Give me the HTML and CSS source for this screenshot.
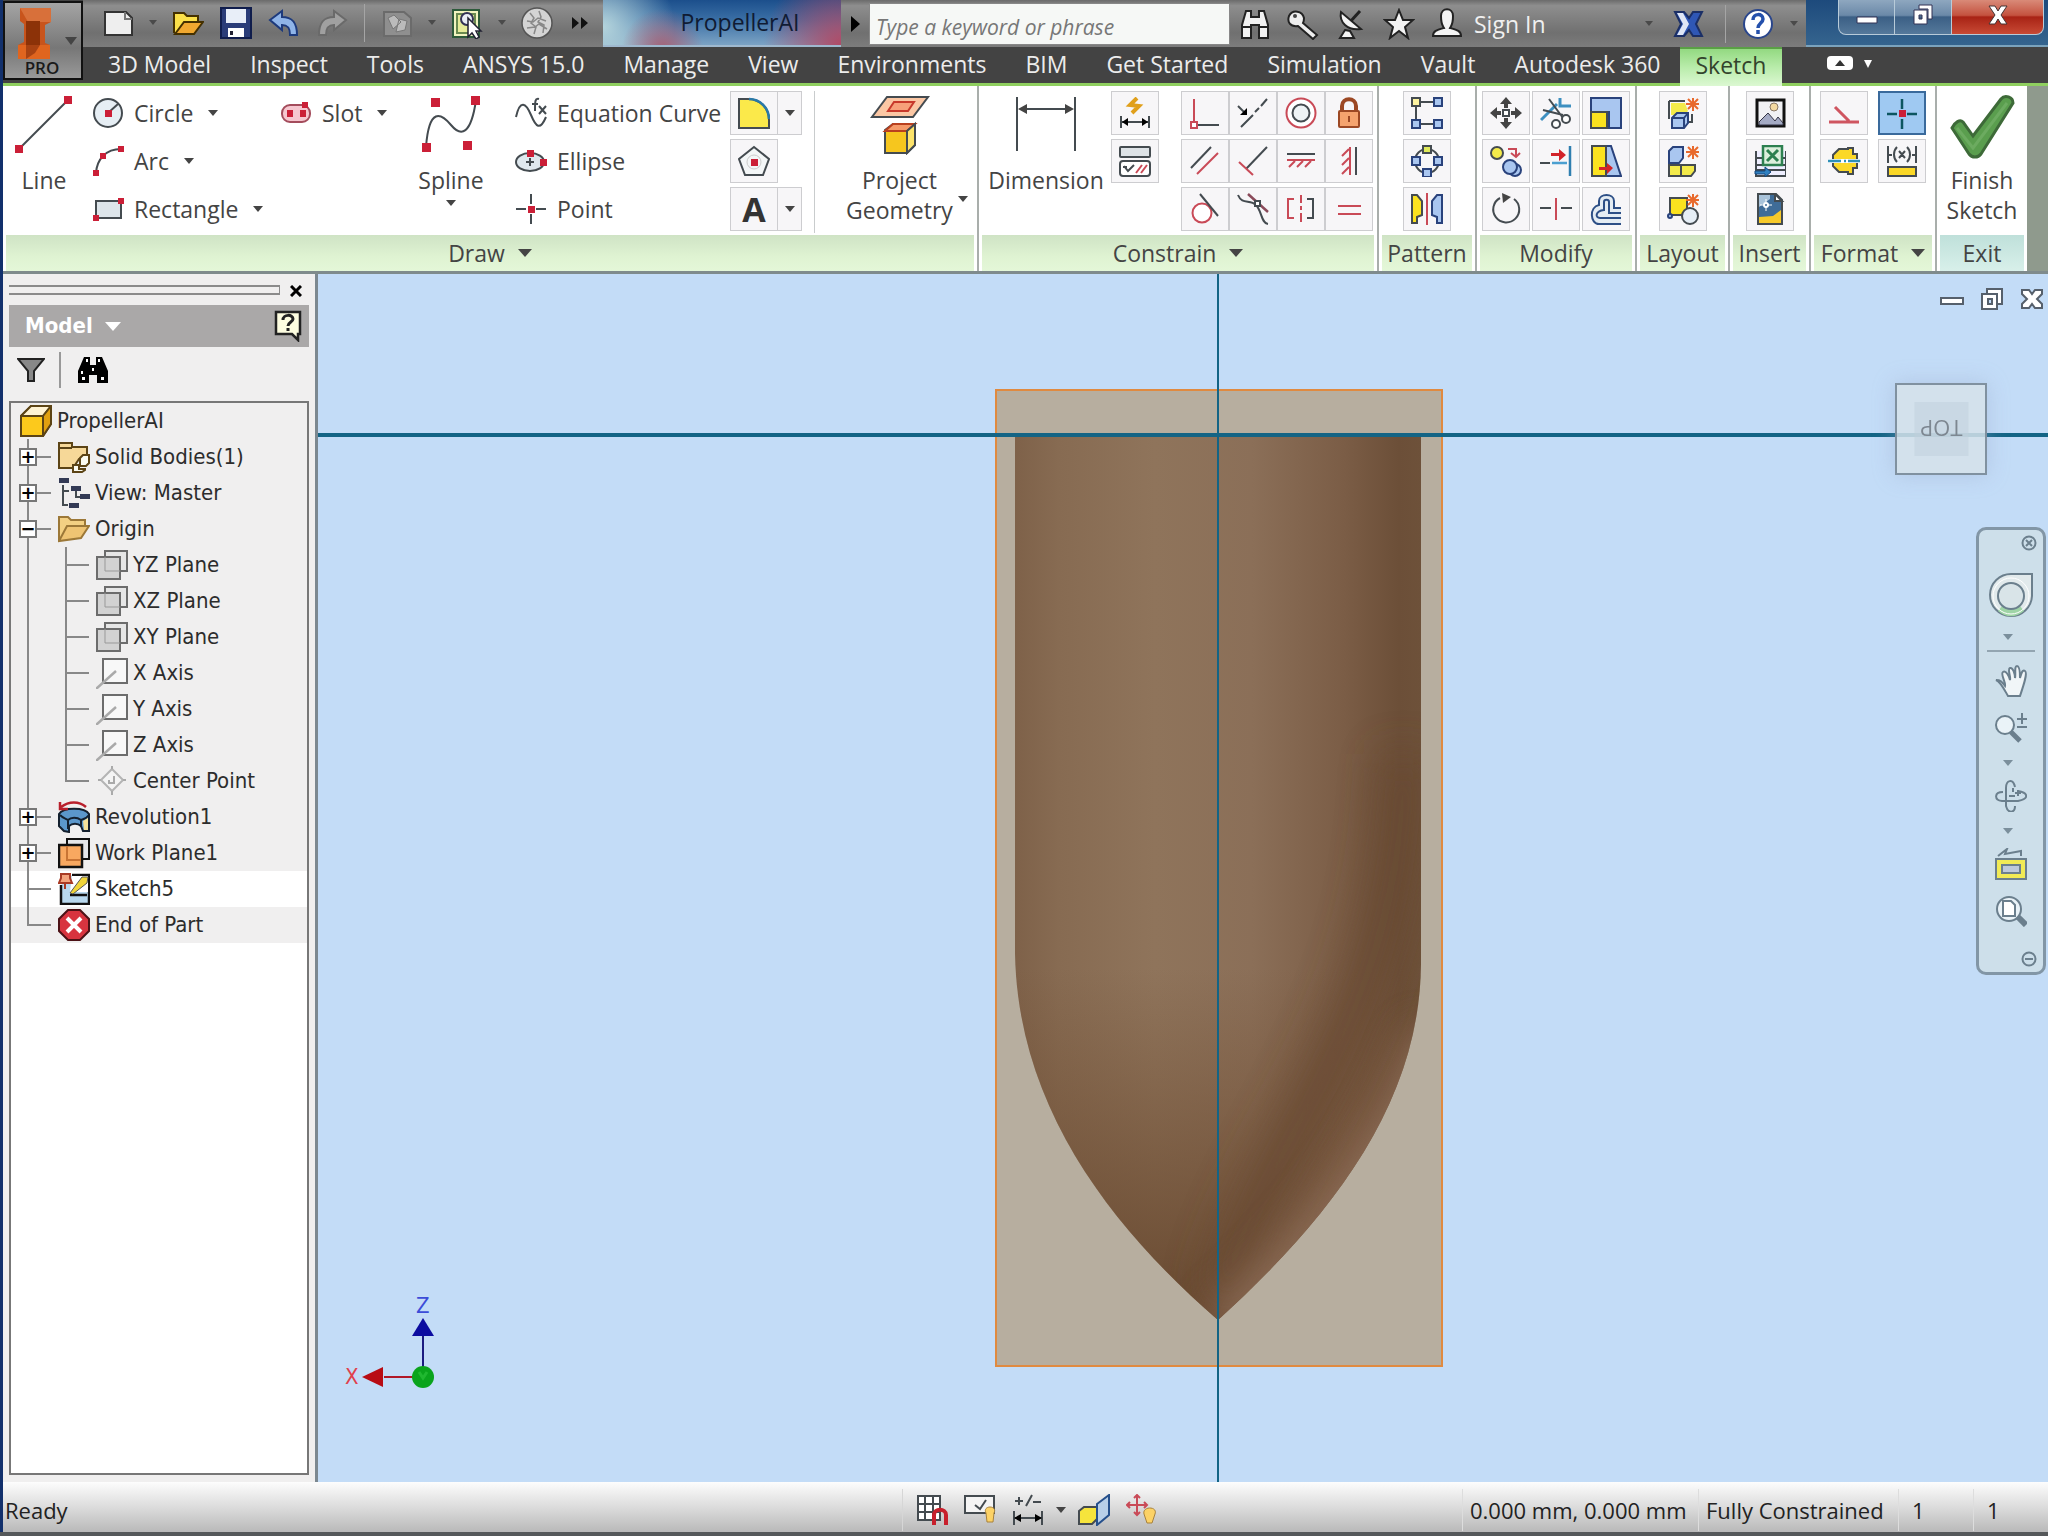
FILE: index.html
```html
<!DOCTYPE html>
<html lang="en">
<head>
<meta charset="utf-8">
<title>PropellerAI</title>
<link rel="stylesheet" href="styles.css">
</head>
<body>
<div class="app">
<header class="head">
  <button class="logo" aria-label="Application menu">
    <svg width="46" height="54" viewBox="0 0 46 54"><path d="M8 1h31v14l-6 3v18l5 2v14H6V38l6-3V17l-4-3z" fill="#c8541c"/><path d="M8 1h31v14H16z" fill="#d8703a"/><path d="M14 14h14v25H14z" fill="#8c3208"/><path d="M6 38h32v14H6z" fill="#e0651f"/><path d="M14 38l14 0-5 8-9 6z" fill="#a84212"/></svg>
    <span>PRO</span>
    <i class="tri"></i>
  </button>
  <div class="titlebar">
    <div class="qat">
      <button aria-label="New"><svg class="ic" viewBox="0 0 32 32"><path d="M3 5h21l6 6v17H3z" fill="#eee" stroke="#333" stroke-width="2"/><path d="M23 5v7h7" fill="none" stroke="#777" stroke-width="2"/></svg></button><i class="tri small"></i>
      <button aria-label="Open"><svg class="ic" viewBox="0 0 32 32"><path d="M2 26V6h10l3 3h11v6" fill="#fbe04a" stroke="#443000" stroke-width="2"/><path d="M3 27l9-12h19l-9 12z" fill="#f0a830" stroke="#443000" stroke-width="2"/></svg></button>
      <button aria-label="Save"><svg class="ic" viewBox="0 0 32 32"><path d="M1 1h30v30H1z" fill="#2a3c78" stroke="#101d4c" stroke-width="2"/><path d="M6 2h20v14H6z" fill="#e8eef8"/><path d="M8 21h16v9H8z" fill="#fff"/><path d="M10 24h3v4h-3z" fill="#223"/></svg></button>
      <button aria-label="Undo"><svg class="ic" viewBox="0 0 32 32"><path d="M2 13L14 4v6c10 0 15 5 15 18h-7c0-7-2-10-8-10v5z" fill="#8fb4e8" stroke="#1d3a7c" stroke-width="2"/></svg></button>
      <button aria-label="Redo"><svg class="ic" viewBox="0 0 32 32"><path d="M30 13L18 4v6C8 10 3 15 3 28h7c0-7 2-10 8-10v5z" fill="#a0a0a0" stroke="#6a6a6a" stroke-width="2"/></svg></button>
      <i class="bar"></i>
      <button aria-label="Update"><svg class="ic" viewBox="0 0 32 32"><path d="M3 5h20l7 6v18H3z" fill="#8f8f8f" stroke="#6b6b6b" stroke-width="2"/><path d="M7 11l6-3 7 7-8 7zM18 12l8 2-2 9-9 2z" fill="#bbb" stroke="#777"/></svg></button><i class="tri small"></i>
      <button aria-label="Select"><svg class="ic" viewBox="0 0 32 32"><path d="M2 3h26v27H2z" fill="#f2f4c0" stroke="#2d5a3a" stroke-width="2"/><path d="M6 7h18v19H6z" fill="#e6ec9a" stroke="#6a8a50" stroke-width="2"/><circle cx="16" cy="12" r="6" fill="#e9eef5" stroke="#335" stroke-width="2"/><path d="M17 11v19l4-4 4 6 3-2-3-6h5z" fill="#fff" stroke="#223" stroke-width="1.5"/></svg></button><i class="tri small"></i>
      <button aria-label="Material"><svg class="ic" viewBox="0 0 32 32"><circle cx="16" cy="16" r="15" fill="#d4d4d4" stroke="#555" stroke-width="1.5"/><path d="M9 6l4 5-3 5 5 4-2 7M18 4l2 6-3 5 6 3-1 8M6 14l6 1 5-4 8 3M6 21l8-1 4-3 8 5" stroke="#888" fill="none" stroke-width="1.5"/></svg></button>
      <button aria-label="More" class="more"><svg width="18" height="14" viewBox="0 0 18 14"><path d="M1 1l7 6-7 6zM10 1l7 6-7 6z" fill="#111"/></svg></button>
    </div>
    <h1 class="doc">PropellerAI</h1>
    <button class="expand" aria-label="Expand search"><svg width="10" height="16" viewBox="0 0 10 16"><path d="M1 0l9 8-9 8z"/></svg></button>
    <input class="search" type="text" placeholder="Type a keyword or phrase" aria-label="Search help">
    <div class="info">
      <button aria-label="Find"><svg class="ic" viewBox="0 0 32 32"><g fill="#f2f2f2" stroke="#222" stroke-width="2"><path d="M7 3h5v6h8V3h5l4 14v13h-9V17h-8v13H3V17z"/><path d="M3 19h9M20 19h9"/></g></svg></button>
      <button aria-label="Tools"><svg class="ic" viewBox="0 0 32 32"><path d="M2 8a8 8 0 0 1 15 2c0 2 0 3-1 5l14 12-4 4-15-13C3 19 0 14 2 8z" fill="#eee" stroke="#222" stroke-width="2"/><circle cx="8" cy="8" r="2" fill="#444"/></svg></button>
      <button aria-label="Communication"><svg class="ic" viewBox="0 0 32 32"><path d="M15 14L25 3" stroke="#222" stroke-width="3"/><path d="M6 4c-2 10 6 19 20 17zM10 22l5 1 4 7H5z" fill="#f4f4f4" stroke="#222" stroke-width="2"/></svg></button>
      <button aria-label="Favorites"><svg class="ic" viewBox="0 0 32 32"><path d="M16 2l4 10h10l-8 7 3 11-9-7-9 7 3-11-8-7h10z" fill="#f4f4f4" stroke="#222" stroke-width="2"/></svg></button>
      <button class="sign"><svg class="ic" viewBox="0 0 32 32"><path d="M10 8c0-9 12-9 12 0s-2 10-3 12c7 2 11 3 11 8H2c0-5 4-6 11-8-1-2-3-3-3-12z" fill="#f4f4f4" stroke="#222" stroke-width="2"/></svg>Sign In</button>
      <i class="tri small push"></i>
      <button class="xchg" aria-label="Exchange"><svg class="ic" viewBox="0 0 32 32"><path d="M2 4h9l5 6 4-6h9l-6 12 6 12h-9l-4-6-5 6H2l6-12z" fill="#2f57b5" stroke="#1b2f66" stroke-width="2"/><path d="M4 5h6l6 11-6 11H4l6-11z" fill="#dfe6f5"/></svg></button>
      <i class="bar"></i>
      <button aria-label="Help"><svg class="ic" viewBox="0 0 32 32"><circle cx="16" cy="16" r="14" fill="#fff" stroke="#2a468c" stroke-width="2"/><path d="M11 12c0-7 10-7 10-1 0 4-5 4-5 9M16 22v4" fill="none" stroke="#2450ac" stroke-width="3.5"/></svg></button>
      <i class="tri small"></i>
    </div>
    <div class="wctl">
      <button aria-label="Minimize"><svg width="24" height="24" viewBox="0 0 24 24"><path d="M2 14h20v6H2z" fill="#fff" stroke="#335" stroke-width="1"/></svg></button>
      <button aria-label="Restore"><svg width="24" height="24" viewBox="0 0 24 24"><path d="M8 2h13v14h-4V6H8zM3 7h13v14H3z M8 12v4h3v-4z" fill="#fff" stroke="#335" fill-rule="evenodd"/></svg></button>
      <button class="close" aria-label="Close"><svg width="24" height="24" viewBox="0 0 24 24"><path d="M3 3h6l3 5 3-5h6l-6 9 6 9h-6l-3-5-3 5H3l6-9z" fill="#fff" stroke="#433"/></svg></button>
    </div>
  </div>
  <nav class="tabs">
    <a href="#">3D Model</a><a href="#">Inspect</a><a href="#">Tools</a><a href="#">ANSYS 15.0</a><a href="#">Manage</a><a href="#">View</a><a href="#">Environments</a><a href="#">BIM</a><a href="#">Get Started</a><a href="#">Simulation</a><a href="#">Vault</a><a href="#">Autodesk 360</a><a href="#" class="on">Sketch</a>
    <button aria-label="Collapse ribbon"><svg width="48" height="16" viewBox="0 0 48 16"><rect x="1" y="1" width="26" height="14" rx="4" fill="#fff"/><path d="M9 11l5-6 5 6z" fill="#333"/><path d="M38 5h8l-4 8z" fill="#fff"/></svg></button>
  </nav>
</header>

<section class="ribbon">
  <div class="panel draw">
    <div class="tools">
      <button class="big line"><svg width="60" height="60" viewBox="0 0 60 60"><path d="M5 54L54 5" class="ink"/><path d="M1 50h8v8H1zM50 1h8v8h-8z" class="pt"/></svg>Line</button>
      <div class="col c1">
        <div class="row"><button class="cmd"><svg class="ic" viewBox="0 0 32 32"><circle cx="16" cy="16" r="14" fill="#e6eef4" class="ink"/><path d="M16 16L26 7" class="ink"/><path d="M13 13h7v7h-7z" class="pt"/></svg>Circle<i class="tri"></i></button></div>
        <div class="row"><button class="cmd"><svg class="ic" viewBox="0 0 32 32"><path d="M4 28C5 14 14 4 29 4" class="ink" fill="none"/><path d="M1 25h6v6H1zM8 8h6v6H8zM26 1h6v6h-6z" class="pt"/></svg>Arc<i class="tri"></i></button></div>
        <div class="row"><button class="cmd"><svg class="ic" viewBox="0 0 32 32"><path d="M4 8h25v17H4z" fill="#dde5ea" class="ink"/><path d="M1 22h6v6H1zM26 5h6v6h-6z" class="pt"/></svg>Rectangle<i class="tri"></i></button></div>
      </div>
      <div class="col c2"><div class="row"><button class="cmd"><svg class="ic" viewBox="0 0 32 32"><rect x="2" y="8" width="28" height="17" rx="8" fill="#f6c6cf" stroke="#a44c5c" stroke-width="2"/><path d="M7 13h6v7H7zM20 13h6v7h-6zM22 5h6v6h-6z" class="pt"/></svg>Slot<i class="tri"></i></button></div></div>
      <button class="big spline"><svg width="60" height="60" viewBox="0 0 60 60"><path d="M5 52C8 12 20 18 30 30S50 40 55 5" class="ink" fill="none" stroke-width="3"/><path d="M1 48h9v9H1zM10 3h9v9h-9zM42 46h9v9h-9zM50 1h9v9h-9z" class="pt"/></svg>Spline<i class="tri"></i></button>
      <div class="col c3">
        <div class="row"><button class="cmd"><svg class="ic" viewBox="0 0 32 32"><path d="M1 20C5 2 11 6 16 18S25 34 31 20" class="ink" fill="none"/><path d="M24 2c-4-1-4 2-4 12M17 7h6M24 9l7 8M31 9l-7 8" class="ink" fill="none"/></svg>Equation Curve</button></div>
        <div class="row"><button class="cmd"><svg class="ic" viewBox="0 0 32 32"><ellipse cx="15" cy="17" rx="14" ry="9" fill="#dfe8ee" class="ink"/><path d="M12 5h7v7h-7zM25 14h7v7h-7z" class="pt"/><path d="M11 17h8M15 13v8" class="ink"/></svg>Ellipse</button></div>
        <div class="row"><button class="cmd"><svg class="ic" viewBox="0 0 32 32"><path d="M1 16h10M21 16h10M16 1v10M16 21v10" class="ink"/><path d="M13 13h7v7h-7z" class="pt"/></svg>Point</button></div>
      </div>
      <div class="col c4">
        <div class="row"><button class="sq" aria-label="Fillet"><svg class="ic" viewBox="0 0 32 32"><path d="M1 2h9c12 0 21 9 21 21v8H1z" fill="#fbe94a" class="ink"/><path d="M11 2c11 0 20 9 20 20" fill="none" stroke="#2979a8" stroke-width="2.500"/></svg></button><button class="sq thin" aria-label="Fillet options"><i class="tri"></i></button></div>
        <div class="row"><button class="sq" aria-label="Polygon"><svg class="ic" viewBox="0 0 32 32"><path d="M16 2l15 12-6 16H7L1 14z" fill="#f3f6f7" class="ink"/><circle cx="16" cy="17" r="7" fill="none" stroke="#ccc"/><path d="M13 14h7v7h-7z" class="pt"/></svg></button></div>
        <div class="row"><button class="sq text">A</button><button class="sq thin" aria-label="Text options"><i class="tri"></i></button></div>
      </div>
      <button class="big proj"><svg width="60" height="60" viewBox="0 0 60 60"><path d="M17 2h41L43 22H2z" fill="#fbc7a4" class="ink"/><path d="M24 7h20l-6 9H18z" fill="#f7a07a" stroke="#c8392b" stroke-width="2"/><path d="M15 35l8-6h22v21l-8 8H15z" fill="#f6c61e" class="ink"/><path d="M15 36h22l8-7H23z" fill="#f59a6a" stroke="#b9401f" stroke-width="2"/><path d="M37 36v22l8-8V29z" fill="#fce36a" class="ink"/></svg><span>Project<br>Geometry</span><i class="tri"></i></button>
    </div>
    <h2>Draw<i class="tri"></i></h2>
  </div>

  <div class="panel constrain">
    <div class="tools">
      <button class="big dimension"><svg width="60" height="60" viewBox="0 0 60 60"><path d="M1 2v54M59 2v54M4 14h52" class="ink"/><path d="M2 14l9-5v10zM58 14l-9-5v10z" fill="#444"/></svg>Dimension</button>
      <div class="col"><div class="row"><button class="sq" aria-label="Automatic dimensions"><svg class="ic" viewBox="0 0 32 32"><path d="M2 19v12M30 19v12M3 25h26" class="ink" stroke-width="3"/><path d="M3 25l6-4v8zM29 25l-6-4v8z"/><path d="M18 1l-7 7 9 1-7 7" fill="none" stroke="#e0a01c" stroke-width="4"/></svg></button></div>
      <div class="row"><button class="sq" aria-label="Show constraints"><svg class="ic" viewBox="0 0 32 32"><rect x="1" y="2" width="30" height="10" rx="1" fill="#dde2e6" class="ink"/><rect x="1" y="16" width="30" height="15" rx="3" fill="#fff" class="ink"/><path d="M5 21l4 5 6-6M8 22l-4 0" class="ink" fill="none"/><path d="M17 28l6-8M22 28l6-8" class="red"/></svg></button></div></div>
      <div class="grid g4">
        <button class="sq" aria-label="Coincident"><svg class="ic" viewBox="0 0 32 32"><path d="M5 2v23" class="red"/><path d="M2 25h6v6H2z" fill="#fff" class="red"/><path d="M9 28h21" class="ink"/></svg></button>
        <button class="sq" aria-label="Collinear"><svg class="ic" viewBox="0 0 32 32"><path d="M4 30l12-12M18 15l4-4M24 9l6-7" class="ink"/><path d="M1 9l8 8" class="ink"/><path d="M10 18V11l-7 7z"/></svg></button>
        <button class="sq" aria-label="Concentric"><svg class="ic" viewBox="0 0 32 32"><circle cx="16" cy="16" r="14.500" fill="#fff" class="red"/><circle cx="16" cy="16" r="8.500" fill="#eef3f5" class="ink"/></svg></button>
        <button class="sq" aria-label="Fix"><svg class="ic" viewBox="0 0 32 32"><path d="M9 14V9c0-9 14-9 14 0v5" fill="none" stroke="#9c4824" stroke-width="4"/><rect x="6" y="14" width="20" height="16" rx="1" fill="#f5a36e" stroke="#9c4824" stroke-width="2"/><path d="M16 19v6" stroke="#9c4824" stroke-width="2"/></svg></button>
        <button class="sq" aria-label="Parallel"><svg class="ic" viewBox="0 0 32 32"><path d="M2 23L22 2" class="ink"/><path d="M8 29L29 8" class="red"/></svg></button>
        <button class="sq" aria-label="Perpendicular"><svg class="ic" viewBox="0 0 32 32"><path d="M9 24L30 2" class="ink"/><path d="M2 17l14 13" class="red"/></svg></button>
        <button class="sq" aria-label="Horizontal"><svg class="ic" viewBox="0 0 32 32"><path d="M2 9h28" class="ink"/><path d="M2 15h28M4 22l6-6M12 22l6-6M20 22l6-6" class="red"/></svg></button>
        <button class="sq" aria-label="Vertical"><svg class="ic" viewBox="0 0 32 32"><path d="M23 2v28" class="ink"/><path d="M17 2v28M16 4l-7 7M16 13l-7 7M16 22l-7 7" class="red"/></svg></button>
        <button class="sq" aria-label="Tangent"><svg class="ic" viewBox="0 0 32 32"><circle cx="13" cy="20" r="9.500" fill="#fff" class="red"/><path d="M11 1l18 22" class="ink"/></svg></button>
        <button class="sq" aria-label="Smooth"><svg class="ic" viewBox="0 0 32 32"><path d="M1 2c4 10 12 4 18 10s5 18 12 19" class="ink" fill="none"/><path d="M11 1l20 18" stroke="#8a4a5a" stroke-width="2.500"/><path d="M18 8h5v5h-5z" fill="#fff" class="ink"/></svg></button>
        <button class="sq" aria-label="Symmetric"><svg class="ic" viewBox="0 0 32 32"><path d="M9 6H3v19h6M16 2v8M16 13v4M16 20v9" class="red" fill="none"/><path d="M22 6h6v19h-6" class="ink" fill="none"/></svg></button>
        <button class="sq" aria-label="Equal"><svg class="ic" viewBox="0 0 32 32"><path d="M5 13h23M5 21h23" class="red"/></svg></button>
      </div>
    </div>
    <h2>Constrain<i class="tri"></i></h2>
  </div>

  <div class="panel pattern">
    <div class="tools"><div class="grid">
      <button class="sq" aria-label="Rectangular pattern"><svg class="ic" viewBox="0 0 32 32"><path d="M5 5v22M9 5h18M9 27h18" class="ink"/><path d="M1 1h8v8H1z" fill="#fdf3a0" class="ink"/><path d="M23 1h8v8h-8zM1 23h8v8H1zM23 23h8v8h-8z" class="bl"/></svg></button>
      <button class="sq" aria-label="Circular pattern"><svg class="ic" viewBox="0 0 32 32"><circle cx="16" cy="16" r="12" fill="none" class="ink"/><path d="M12 1h8v7h-8z" fill="#e0ea5a" class="ink"/><path d="M1 12h8v8H1zM23 12h8v8h-8zM12 24h8v8h-8z" class="bl"/></svg></button>
      <button class="sq" aria-label="Mirror"><svg class="ic" viewBox="0 0 32 32"><path d="M1 2h5l5 6v14l-5 2v6H1z" fill="#fbe21f" class="ink"/><path d="M31 2h-5l-5 6v14l5 2v6h5z" class="bl"/><path d="M16 0v32" class="red"/></svg></button>
    </div></div>
    <h2>Pattern</h2>
  </div>

  <div class="panel modify">
    <div class="tools"><div class="grid g3">
      <button class="sq" aria-label="Move"><svg class="ic" viewBox="0 0 32 32"><path d="M16 0l6 7h-4v4h-4V7h-4zM16 32l6-7h-4v-4h-4v4h-4zM0 16l7-6v4h4v4H7v4zM32 16l-7-6v4h-4v4h4v4z" fill="#444"/><path d="M13 13h6v6h-6z" fill="#fff" class="ink"/></svg></button>
      <button class="sq" aria-label="Trim"><svg class="ic" viewBox="0 0 32 32"><path d="M1 23L17 7M20 1v8h11" stroke="#3d8fc0" stroke-width="3" fill="none"/><path d="M9 2l14 19M3 13l20 5" class="ink"/><circle cx="26" cy="22" r="4" fill="#fff" class="ink"/><circle cx="16" cy="27" r="4" fill="#fff" class="ink"/></svg></button>
      <button class="sq" aria-label="Scale"><svg class="ic" viewBox="0 0 32 32"><path d="M1 1h30v30H19V15H1z" class="bl"/><path d="M1 15h16v16H1z" fill="#fbe21f" class="ink"/></svg></button>
      <button class="sq" aria-label="Copy"><svg class="ic" viewBox="0 0 32 32"><circle cx="7" cy="8" r="6" fill="#f3ea4a" class="ink"/><circle cx="25" cy="25" r="6" class="bl"/><circle cx="20" cy="22" r="7" class="bl"/><path d="M18 4h8v7M21 8l5 4 4-4" class="red" fill="none"/></svg></button>
      <button class="sq" aria-label="Extend"><svg class="ic" viewBox="0 0 32 32"><path d="M30 1v30" stroke="#2f7fb0" stroke-width="2.500"/><path d="M0 18h10" class="ink"/><path d="M12 18h15" stroke="#4b9fd0" stroke-width="2.500"/><path d="M11 8h8V4l7 6-7 6v-5h-8z" fill="#d2232a"/></svg></button>
      <button class="sq" aria-label="Stretch"><svg class="ic" viewBox="0 0 32 32"><path d="M16 1h5l10 30H16z" class="bl"/><path d="M2 1h14v30H2z" fill="#fbe21f" class="ink"/><path d="M9 22h8v-4l6 5-6 6v-4H9z" fill="#d2232a"/></svg></button>
      <button class="sq" aria-label="Rotate"><svg class="ic" viewBox="0 0 32 32"><path d="M10 5a13 13 0 1 0 14 1" fill="none" class="ink" stroke-width="3"/><path d="M12 0l9 4-8 6z" fill="#444"/></svg></button>
      <button class="sq" aria-label="Split"><svg class="ic" viewBox="0 0 32 32"><path d="M0 15h11M21 15h11" class="ink"/><path d="M16 5v22" class="red"/></svg></button>
      <button class="sq" aria-label="Offset"><svg class="ic" viewBox="0 0 32 32"><path d="M31 15h-7V8c0-8-15-8-15 0v4C-1 14 0 31 9 31h22M31 20H19V9c0-3-5-3-5 0v8c-9 1-9 8-4 8h21" fill="#e4ecf3" stroke="#2d4f86" stroke-width="2"/></svg></button>
    </div></div>
    <h2>Modify</h2>
  </div>

  <div class="panel layout">
    <div class="tools"><div class="grid">
      <button class="sq" aria-label="Make part"><svg class="ic" viewBox="0 0 32 32"><path d="M2 4h16M2 4v18M25 17v8h-3" class="ink" fill="none"/><path d="M4 6h14l3 8-4 4H4z" fill="#f3ea4a"/><path d="M5 21l5-5h11v10l-4 5H5z" class="bl"/><path d="M5 21h12v10M17 21l4-5" fill="none" stroke="#29427c" stroke-width="2"/><path d="M26 1v13M19 7h14M21 2l10 10M31 2L21 12" class="sun"/></svg></button>
      <button class="sq" aria-label="Make components"><svg class="ic" viewBox="0 0 32 32"><path d="M2 20h12v11H2zM14 20h14v6l-4 5H14z" fill="#f3ea4a" class="ink"/><path d="M2 6l4-4h10v11l-4 5H2z" class="bl"/><path d="M26 1v13M19 7h14M21 2l10 10M31 2L21 12" class="sun"/></svg></button>
      <button class="sq" aria-label="Create block"><svg class="ic" viewBox="0 0 32 32"><path d="M3 5h17v17H3z" fill="#fbe21f" class="ink"/><circle cx="3" cy="23" r="2" class="bl"/><circle cx="23" cy="23" r="8" fill="#e6eef6" class="ink"/><path d="M26 1v13M19 7h14M21 2l10 10M31 2L21 12" class="sun"/></svg></button>
    </div></div>
    <h2>Layout</h2>
  </div>

  <div class="panel insert">
    <div class="tools"><div class="grid">
      <button class="sq" aria-label="Insert image"><svg class="ic" viewBox="0 0 32 32"><path d="M3 3h27v26H3z" fill="#f1f1f4" stroke="#111" stroke-width="3"/><circle cx="20" cy="10" r="4" fill="#f3d9a2" stroke="#876"/><path d="M5 25l9-9 7 8 3-4 5 6v2H5z" fill="#a4aac4" stroke="#334"/></svg></button>
      <button class="sq" aria-label="Import points"><svg class="ic" viewBox="0 0 32 32"><path d="M2 6v25h30V6M2 13h30M2 20h30M2 25h30" class="ink" fill="#eef"/><path d="M9 1h19v19H9z" fill="#dcefdc" stroke="#2d8050" stroke-width="2.500"/><path d="M13 5l11 11M24 5L13 16" stroke="#2d8050" stroke-width="3"/><path d="M1 26h10v-4l6 5-6 5v-3H1z" fill="#2f80c0" stroke="#15477c"/></svg></button>
      <button class="sq" aria-label="Insert drawing"><svg class="ic" viewBox="0 0 32 32"><path d="M4 1h18l6 6v24H4z" fill="#f6c92a" class="ink"/><path d="M5 2h17l5 6v9l-8 6-14 1z" fill="#3f6c98"/><path d="M5 2h11v4L5 14z" fill="#a9c3da"/><path d="M21 1v7h7z" fill="#fff" class="ink"/><circle cx="12" cy="12" r="2" fill="none" stroke="#fff" stroke-width="2"/><path d="M12 6v4M12 14v4M6 12h4M14 12h4" stroke="#fff" stroke-width="1"/></svg></button>
    </div></div>
    <h2>Insert</h2>
  </div>

  <div class="panel format">
    <div class="tools"><div class="grid g2">
      <button class="sq" aria-label="Construction"><svg class="ic" viewBox="0 0 32 32"><path d="M1 25h30M7 10l14 14" stroke="#cf5560" stroke-width="3"/></svg></button>
      <button class="sq on" aria-label="Center point"><svg class="ic" viewBox="0 0 32 32"><path d="M1 17h10M21 17h10M16 2v10M16 22v10" stroke="#0c5560" stroke-width="2.500"/><path d="M13 13h7v7h-7z" class="pt"/></svg></button>
      <button class="sq" aria-label="Centerline"><svg class="ic" viewBox="0 0 32 32"><path d="M11 4h9v-1h5v6h4v14h-4v6h-5v-2h-9l-6-6v-11z" fill="#fbd827" class="ink"/><path d="M0 16h32" stroke="#fff" stroke-width="4"/><path d="M0 16h13M16 16h2M20 16h12" stroke="#2f90b8" stroke-width="2.500"/></svg></button>
      <button class="sq" aria-label="Driven dimension"><svg class="ic" viewBox="0 0 32 32"><path d="M2 1v17M2 10h4M30 1v17M26 10h4M11 2c-4 4-4 11 0 15M21 2c4 4 4 11 0 15M13 6l6 7M19 6l-6 7" class="ink" fill="none"/><path d="M2 22h28v9H2z" fill="#fbd827" class="ink"/></svg></button>
    </div></div>
    <h2>Format<i class="tri"></i></h2>
  </div>

  <div class="panel exit">
    <div class="tools"><button class="big"><svg width="66" height="66" viewBox="0 0 66 66"><path d="M3 34c3-6 8-9 11-6l10 14L52 5c4-5 12-2 12 4L32 60c-3 4-9 4-12 0z" fill="#5a9e4e" stroke="#3d6a38" stroke-width="3"/><path d="M8 34l16 20L58 9" fill="none" stroke="#6cab60" stroke-width="3"/></svg><span>Finish<br>Sketch</span></button></div>
    <h2>Exit</h2>
  </div>
</section>

<main class="work">
  <aside class="side">
    <div class="grip"><i></i><button aria-label="Close panel"><svg width="12" height="12" viewBox="0 0 12 12"><path d="M1 1l10 10M11 1L1 11" stroke="#000" stroke-width="3"/></svg></button></div>
    <div class="model"><button>Model<i class="tri"></i></button><button aria-label="Panel help"><svg width="28" height="32" viewBox="0 0 28 32"><path d="M2 2h24v22h-2v6l-6-6H2z" fill="#fdfde0" stroke="#222" stroke-width="2.500"/><path d="M9 10c0-6 10-6 10-1 0 3-5 3-5 7M14 18v3" fill="none" stroke="#222" stroke-width="3"/></svg></button></div>
    <div class="filter">
      <button aria-label="Filter"><svg width="28" height="26" viewBox="0 0 28 26"><path d="M1 2h26L17 14v10h-6V14z" fill="#888" stroke="#222" stroke-width="2"/></svg></button><i></i>
      <button aria-label="Find"><svg width="32" height="28" viewBox="0 0 32 28"><path d="M7 1h6v8h6V1h6l6 14v12H20v-8h-8v8H1V15z"/><path d="M9 3h2v3H9zM21 3h2v3h-2zM4 15h2v3H4zM5 21h3v3H5zM24 21h3v3h-3zM15 12h2v3h-2z" fill="#fff"/></svg></button>
    </div>
    <div class="tree">
      <div class="node root"><svg class="ic" viewBox="0 0 32 32"><path d="M1 11L11 1h20v18L23 31H1z" fill="#fcc91c" class="brown"/><path d="M1 11h22l8-10H11z" fill="#fff3d2" class="brown"/><path d="M23 11v20l8-12V1z" fill="#e0a010" class="brown"/></svg>PropellerAI</div>
      <ul>
        <li><div class="node"><button class="tg" aria-label="Expand">+</button><svg class="ic" viewBox="0 0 32 32"><path d="M1 27V2h13v4h15v12h-8l-6 9z" fill="#f6d898" class="brown"/><path d="M1 7h13" class="brown"/><path d="M22 17l3-3h6v8l-3 3h-6zM15 24h6v4h6v1l-3 2h-9z" fill="#fbfbf0" class="brown"/></svg>Solid Bodies(1)</div></li>
        <li><div class="node"><button class="tg" aria-label="Expand">+</button><svg class="ic" viewBox="0 0 32 32"><path d="M1 1h10v5H1zM13 9h10v5H13zM22 17h10v5H22zM11 26h10v5H11z" fill="#333a55"/><path d="M5 8v20h5M5 14h6M18 14v6h4" class="ink" fill="none"/></svg>View: Master</div></li>
        <li><div class="node"><button class="tg" aria-label="Collapse">−</button><svg class="ic" viewBox="0 0 32 32"><path d="M1 28V4h9l3 3h14v5" fill="#f3d083" stroke="#9c7838" stroke-width="2"/><path d="M1 28l8-15h22l-8 12z" fill="#efc473" stroke="#9c7838" stroke-width="2"/></svg>Origin</div>
          <ul>
            <li><div class="node"><svg class="ic" viewBox="0 0 32 32"><path d="M9 2h22v20H9z" fill="#e6e6e6" class="gy"/><path d="M1 8h23v22H1z" fill="#d2d2d2" class="gy"/><path d="M9 8v14h15" fill="none" stroke="#999"/></svg>YZ Plane</div></li>
            <li><div class="node"><svg class="ic" viewBox="0 0 32 32"><path d="M9 2h22v20H9z" fill="#e6e6e6" class="gy"/><path d="M1 8h23v22H1z" fill="#d2d2d2" class="gy"/><path d="M9 8v14h15" fill="none" stroke="#999"/></svg>XZ Plane</div></li>
            <li><div class="node"><svg class="ic" viewBox="0 0 32 32"><path d="M9 2h22v20H9z" fill="#e6e6e6" class="gy"/><path d="M1 8h23v22H1z" fill="#d2d2d2" class="gy"/><path d="M9 8v14h15" fill="none" stroke="#999"/></svg>XY Plane</div></li>
            <li><div class="node"><svg class="ic" viewBox="0 0 32 32"><path d="M7 2h24v24H7z" fill="#f8f8f8" class="gy"/><path d="M0 32l20-18" stroke="#aaa" stroke-width="2.500"/></svg>X Axis</div></li>
            <li><div class="node"><svg class="ic" viewBox="0 0 32 32"><path d="M7 2h24v24H7z" fill="#f8f8f8" class="gy"/><path d="M0 32l20-18" stroke="#aaa" stroke-width="2.500"/></svg>Y Axis</div></li>
            <li><div class="node"><svg class="ic" viewBox="0 0 32 32"><path d="M7 2h24v24H7z" fill="#f8f8f8" class="gy"/><path d="M0 32l20-18" stroke="#aaa" stroke-width="2.500"/></svg>Z Axis</div></li>
            <li><div class="node"><svg class="ic" viewBox="0 0 32 32"><path d="M16 4l11 11-11 11L5 15z" fill="#f4f4f4" stroke="#b4b4b4" stroke-width="2"/><path d="M18 11v7h-5v-3M16 1v3M16 26v4M2 15h3M27 15h3" fill="none" stroke="#aaa" stroke-width="2"/></svg>Center Point</div></li>
          </ul>
        </li>
        <li><div class="node"><button class="tg" aria-label="Expand">+</button><svg class="ic" viewBox="0 0 32 32"><path d="M1 13c4-7 26-7 30 0v17h-6l-2-5c-3-3-9-3-12 0v6l-5-1-5-5z" fill="#5b97cb" stroke="#14202e" stroke-width="2"/><path d="M2 14c4 4 5 3 8 5v9M10 19c3-3 9-3 13 0v7M31 14c-3 4-5 4-8 5" fill="none" stroke="#14202e" stroke-width="2"/><path d="M25 20l5-3v12h-4z" fill="#f6e29a"/><path d="M3 6c8-6 18-6 25 0M2 1v7h8" fill="none" stroke="#b8202c" stroke-width="2.500"/></svg>Revolution1</div></li>
        <li><div class="node"><button class="tg" aria-label="Expand">+</button><svg class="ic" viewBox="0 0 32 32"><path d="M9 2h22v20H9z" fill="#e4e6ea" stroke="#111" stroke-width="2"/><path d="M1 8h23v22H1z" fill="#f8a860" stroke="#111" stroke-width="2.500"/><path d="M9 9v14h14" fill="none" stroke="#c87434" stroke-width="2"/></svg>Work Plane1</div></li>
        <li class="active"><div class="node"><svg class="ic" viewBox="0 0 32 32"><path d="M3 12v19h28V2H14" fill="#b8d8ee" stroke="#111" stroke-width="2.500"/><path d="M14 3h16v16H12z" fill="#fff"/><path d="M12 22h17" stroke="#111" stroke-width="2.500"/><path d="M12 20l12-16 6 0-1 6-14 11z" fill="#f1d63a" stroke="#555"/><path d="M3 1h9v4l2 5H1l2-5zM7 10v6" fill="#f3a37c" stroke="#a83a24" stroke-width="2"/></svg>Sketch5</div></li>
        <li><div class="node"><svg class="ic" viewBox="0 0 32 32"><path d="M10 1h12l9 9v12l-9 9H10l-9-9V10z" fill="#d8343f" stroke="#4c1216" stroke-width="2"/><path d="M9 9l14 14M23 9L9 23" stroke="#fff" stroke-width="4"/></svg>End of Part</div></li>
      </ul>
    </div>
  </aside>

  <section class="canvas">
    <svg class="scene" viewBox="0 0 1730 1208" preserveAspectRatio="xMidYMid slice">
      <defs>
        <linearGradient id="body"><stop offset="0" stop-color="#7d6048"/><stop offset=".12" stop-color="#876b52"/><stop offset=".35" stop-color="#8f745b"/><stop offset=".58" stop-color="#8b6f58"/><stop offset=".8" stop-color="#7b5d46"/><stop offset=".93" stop-color="#6c4f38"/><stop offset="1" stop-color="#6e523a"/></linearGradient>
        <linearGradient id="nose" x1="0" y1="0" x2="0" y2="1"><stop offset=".6" stop-color="#6e4b30" stop-opacity="0"/><stop offset="1" stop-color="#65462d" stop-opacity=".95"/></linearGradient>
        <clipPath id="hull"><path d="M697 161V680C700 835 795 955 900 1046C1005 950 1102 835 1103 690V161z"/></clipPath>
        <filter id="soft" x="-50%" y="-50%" width="200%" height="200%"><feGaussianBlur stdDeviation="20"/></filter>
      </defs>
      <path d="M678 116h446v976H678z" fill="#b7ae9f" stroke="#e08a40" stroke-width="2"/>
      <g clip-path="url(#hull)">
        <path d="M690 160h420v890H690z" fill="url(#body)"/>
        <path d="M690 160h420v890H690z" fill="url(#nose)"/>
        <path d="M1086 480C1086 760 930 880 904 1030" fill="none" stroke="#684a33" stroke-width="44" opacity=".8" filter="url(#soft)"/>
        <path d="M1120 760C1094 860 1004 970 906 1060" fill="none" stroke="#957560" stroke-width="50" opacity=".8" filter="url(#soft)"/>
      </g>
      <path d="M0 161h1730" stroke="#136485" stroke-width="4"/>
      <path d="M900 0v1209" stroke="#136485" stroke-width="2"/>
    </svg>
    <div class="docctl">
      <button aria-label="Minimize document"><svg width="24" height="24" viewBox="0 0 24 24"><path d="M1 11h22v6H1z" fill="#fff" stroke="#56606c" stroke-width="2"/></svg></button>
      <button aria-label="Restore document"><svg width="24" height="24" viewBox="0 0 24 24"><path d="M7 2h15v15h-5V7H7zM2 7h15v15H2zM8 12v5h4v-5z" fill="#fff" stroke="#56606c" stroke-width="2" fill-rule="evenodd"/></svg></button>
      <button aria-label="Close document"><svg width="24" height="24" viewBox="0 0 24 24"><path d="M2 3h7l3 4 3-4h7v4l-5 5 5 5v4h-7l-3-4-3 4H2v-4l5-5-5-5z" fill="#fff" stroke="#56606c" stroke-width="2"/></svg></button>
    </div>
    <button class="cube"><span>TOP</span></button>
    <div class="nav">
      <button class="end" aria-label="Close navigation bar"><svg width="16" height="16" viewBox="0 0 16 16"><circle cx="8" cy="8" r="6.500" fill="none" class="sl"/><path d="M5 5l6 6M11 5l-6 6" class="sl"/></svg></button>
      <button class="wheel" aria-label="Steering wheel"><svg width="48" height="48" viewBox="0 0 48 48"><path d="M24 2h21v22A21 21 0 1 1 24 2z" fill="#e2eaec" class="sl"/><path d="M11 39c8 7 18 7 26 0l-4-5c-6 4-12 4-18 0z" fill="#9fd4a6"/><circle cx="24" cy="24" r="13" fill="#d9e4e8" class="sl"/><circle cx="24" cy="24" r="18" fill="none" stroke="#fff"/></svg></button>
      <i class="tri"></i><hr>
      <button aria-label="Pan"><svg class="ic" viewBox="0 0 32 32"><path d="M1 15c5 0 6 2 9 6 1-4-5-12-2-14s6 4 7 8c1-4-3-11 0-12s5 6 5 10c1-4-1-12 2-12s3 8 3 12c1-3 2-9 5-7s-2 16-5 25H13C10 26 6 17 1 15z" fill="#f1f6f8" class="sl"/></svg></button>
      <button aria-label="Zoom"><svg class="ic" viewBox="0 0 32 32"><circle cx="10" cy="13" r="9" fill="#eaf3f8" class="sl"/><path d="M16 20l9 9" stroke="#6b7f8d" stroke-width="5"/><path d="M22 7h10M27 1v11M22 15h10" class="sl"/></svg></button>
      <i class="tri"></i>
      <button aria-label="Orbit"><svg class="ic" viewBox="0 0 32 32"><path d="M20 7C18-2 11 0 11 8v18c2 8 9 7 9 0M8 12c-9 0-9 8-1 9h16c11-2 11-8 0-10M18 8v4M14 16h6M23 10v6M20 13h6" fill="none" class="sl"/></svg></button>
      <i class="tri"></i>
      <button aria-label="Look at"><svg class="ic" viewBox="0 0 32 32"><path d="M1 11h30v20H1z" fill="#f1ea55" class="sl"/><path d="M7 17h18v8H7z" fill="#bdc9dc" class="sl"/><path d="M3 8l9-7-2 5 16-3v5" fill="none" class="sl"/></svg></button>
      <button aria-label="Zoom all"><svg class="ic" viewBox="0 0 32 32"><circle cx="14" cy="14" r="12" fill="#eaf3f8" class="sl"/><path d="M23 22l8 8" stroke="#6b7f8d" stroke-width="6"/><path d="M8 6h8l4 4v11H8z" fill="#fff" class="sl"/></svg></button>
      <button class="end last" aria-label="Customize navigation bar"><svg width="16" height="16" viewBox="0 0 16 16"><circle cx="8" cy="8" r="6.500" fill="none" class="sl"/><path d="M4 8h8" class="sl"/></svg></button>
    </div>
    <svg class="axes" width="100" height="100" viewBox="0 0 100 100"><text x="74" y="19" fill="#3c4cd8">Z</text><text x="3" y="90" fill="#e0404c">X</text><path d="M81 40v36" stroke="#1b1b80" stroke-width="2"/><path d="M81 24l11 18H70z" fill="#0c0ca0"/><path d="M42 83h30" stroke="#b01828" stroke-width="2"/><path d="M20 83l21-10v20z" fill="#b80c14"/><circle cx="81" cy="83" r="11" fill="#0aa41c"/><path d="M77 78l4 6 4-6" fill="none" stroke="#20b830" stroke-width="3"/></svg>
  </section>
</main>

<footer class="status">
  <span class="ready">Ready</span>
  <div class="snap">
    <button aria-label="Snap to grid"><svg class="ic" viewBox="0 0 32 32"><path d="M2 2h22v24H2zM2 10h22M2 18h22M9 2v24M17 2v24" fill="#fff" class="ink"/><path d="M18 31V21c0-7 12-7 12 0v10" fill="none" stroke="#c8202c" stroke-width="4"/></svg></button>
    <button aria-label="Show all constraints"><svg class="ic" viewBox="0 0 32 32"><path d="M1 2h29v17H1z" fill="#f4f4f4" class="ink"/><path d="M11 11l5 4 6-9" fill="none" class="ink"/><path d="M22 19c-4-8 12-8 8 0l-1 9h-6z" fill="#fcd266" stroke="#a8823c"/></svg></button>
    <button aria-label="Dimension display"><svg class="ic" viewBox="0 0 32 32"><path d="M3 7h8M7 3v8M14 12l6-11M21 8h8M2 17v14M30 17v14M3 24h26" class="ink"/><path d="M2 24l7-4v8zM30 24l-7-4v8z"/></svg></button><i class="tri"></i>
    <button aria-label="Slice graphics"><svg class="ic" viewBox="0 0 32 32"><path d="M1 17l5-4h13v12l-5 5H1z" fill="#f6e43c" class="ink"/><path d="M19 10L31 1v20L19 31z" fill="#b8cfe8" stroke="#26508c" stroke-width="2"/></svg></button>
    <button aria-label="Degrees of freedom"><svg class="ic" viewBox="0 0 32 32"><path d="M11 1v20M1 11h20M8 4l3-3 3 3M8 18l3 3 3-3M4 8l-3 3 3 3M18 8l3 3-3 3" class="red" fill="none"/><path d="M18 20c-2-8 14-8 11 0l-3 9h-5z" fill="#fcd266" stroke="#a8823c"/></svg></button>
  </div>
  <output class="xy">0.000 mm, 0.000 mm</output><output class="fc">Fully Constrained</output><output class="n1">1</output><output class="n1">1</output>
</footer>
</div>
</body>
</html>
```
FILE: styles.css
```css
* { box-sizing: border-box; }
body { margin: 0; font: 23px/30px "Open Sans", "Noto Sans", sans-serif; color: #444; background: #12306c; }
button { font: inherit; color: inherit; background: none; border: 0; padding: 0; margin: 0; display: flex; align-items: center; white-space: nowrap; }
h1, h2 { margin: 0; font: inherit; }
ul { margin: 0; padding: 0; list-style: none; }
svg { display: block; flex: none; }
.ic { width: 32px; height: 32px; }
.tri { display: block; flex: none; width: 0; height: 0; border: 5px solid transparent; border-top: 6px solid #444; border-bottom: 0; }
.tri.small { border-top-color: #4a4a4a; border-width: 5px 4px 0; }
.ink { stroke: #444b50; stroke-width: 2px; }
.red { stroke: #c94a57; stroke-width: 2px; }
.pt { fill: #cb1f37; }
.bl { fill: #a9c6f0; stroke: #29427c; stroke-width: 2px; }
.sun { stroke: #e8692c; stroke-width: 2px; }
.brown { stroke: #5c4415; stroke-width: 2px; }
.gy { stroke: #6c6c6c; stroke-width: 2px; }
.sl { stroke: #6b7f8d; stroke-width: 2px; }

.app { min-height: 100vh; display: flex; flex-direction: column; padding-left: 3px; border-bottom: 4px solid #55585a; }

/* title bar and tabs */
.head { display: grid; grid-template-columns: 80px 1fr; grid-template-rows: 47px 36px; background: #434343; border-bottom: 3px solid #8fcf5f; height: 86px; }
.logo { grid-row: 1 / 3; position: relative; flex-direction: column; margin-top: 1px; height: 79px; border: 2px solid #111; background: linear-gradient(#a4a4a4, #777 60%, #999); color: #1a1a1a; font-size: 17px; line-height: 20px; font-weight: 600; padding: 4px 12px 0 0; }
.logo svg { margin-left: -4px; }
.logo span { margin-left: 10px; margin-top: -3px; }
.logo .tri { position: absolute; right: 4px; top: 34px; border-width: 8px 6px 0; }
.titlebar { display: flex; background: linear-gradient(#6b6b6b, #8e8e8e 12%, #707070 70%, #7c7c7c); }
.qat { flex: 0 0 520px; display: flex; align-items: center; gap: 16px; padding: 0 0 2px 19px; }
.qat .tri { margin: 0 -1px; }
.qat .more { margin-left: 2px; }
.bar { width: 1px; height: 38px; background: #a5a5a5; }
.doc { flex: 0 0 238px; padding-left: 36px; text-align: center; line-height: 44px; color: #101b33; border-bottom: 2px solid #9fb9cf; background: radial-gradient(circle at 100% 100%, #b04a66, transparent 32%), radial-gradient(circle at 25% 110%, #a55f74, transparent 22%), radial-gradient(circle at 0 60%, #b4d4dc, transparent 30%), linear-gradient(#1c4f8c, #3b70a6 45%, #7ca3c4); }
.expand { flex: 0 0 28px; justify-content: center; }
.search { flex: 1 1 0; min-width: 200px; height: 42px; align-self: center; margin: 0; border: 1px solid #888; background: #f6f8f6; padding: 6px 6px 0; font: italic 21px/30px "Open Sans", "Noto Sans", sans-serif; color: #666; }
.search::placeholder { color: #777; opacity: 1; }
.info { flex: 0 0 576px; display: flex; align-items: center; gap: 16px; padding: 0 8px 0 9px; }
.info .sign { color: #f0f0f0; gap: 11px; }
.info .push { margin-left: auto; }
.info .xchg { margin: 0 4px; }
.wctl { flex: 0 0 242px; display: flex; justify-content: flex-end; align-items: flex-start; padding-right: 4px; background: linear-gradient(#1d4a7c, #35648e); border-bottom: 2px solid #7ba3bd; }
.wctl button { width: 57px; height: 35px; justify-content: center; border: 1px solid #b8cbd9; border-top: 0; background: linear-gradient(#8ea7bf, #6b89a8 45%, #3b5f85 50%, #55799b); border-radius: 0 0 0 8px; padding-bottom: 4px; }
.wctl button + button { border-radius: 0; border-left: 0; }
.wctl button.close { width: 92px; background: linear-gradient(#d98a78, #c4523f 45%, #a82315 50%, #c84a35); border-radius: 0 0 8px 0; }
.tabs { display: flex; color: #ececec; }
.tabs a { color: inherit; text-decoration: none; padding: 0 19px 0 20px; line-height: 34px; white-space: nowrap; height: 36px; }
.tabs a:first-child { padding-left: 25px; }
.tabs a.on { color: #33432c; padding: 0 16px; margin: 0 0 -3px; background: linear-gradient(#93d981, #b9ecab 50%, #dcf8d2); height: 39px; border-top: 2px solid #5aa045; line-height: 32px; }
.tabs button { margin: 0 0 4px 44px; }

/* ribbon */
.ribbon { display: flex; height: 188px; background: #8f9a8d; border-bottom: 3px solid #7f8b8c; padding-right: 21px; }
.panel { display: flex; flex-direction: column; background: #fff; border-right: 2px solid #a9aeab; }
.tools { display: flex; height: 149px; padding-top: 5px; }
.panel h2 { display: flex; align-items: center; justify-content: center; gap: 13px; height: 36px; margin: 0 3px; line-height: 34px; background: linear-gradient(#cfe3c5, #dff3d2 60%, #e4f7d8); }
.panel h2 .tri { border-width: 8px 7px 0; }
.draw { flex: 1; }
.constrain { flex: 0 0 400px; }
.pattern { flex: 0 0 98px; }
.modify { flex: 0 0 160px; }
.layout { flex: 0 0 93px; }
.insert { flex: 0 0 81px; }
.format { flex: 0 0 126px; }
.exit { flex: 0 0 90px; border-right: 0; }
.panel.exit h2 { background: linear-gradient(#bfe0da, #d8f0ea); }
.big { flex-direction: column; justify-content: flex-start; flex: none; padding-top: 4px; line-height: 30px; text-align: center; }
.big svg { margin-bottom: 10px; }
.big .tri { margin-top: 5px; }
.line { width: 82px; }
.spline { width: 80px; margin-left: 7px; }
.proj { position: relative; width: 163px; padding-left: 7px; border-left: 1px solid #c9cccd; margin-left: 12px; height: 142px; }
.proj .tri { position: absolute; right: 9px; top: 100px; }
.dimension { width: 130px; margin-left: 2px; }
.exit .big { width: 90px; padding-top: 3px; }
.exit .big svg { margin-bottom: 5px; }
.col { display: flex; flex: none; flex-direction: column; gap: 4px; }
.row { display: flex; height: 44px; align-items: center; }
.cmd { gap: 10px; }
.cmd .tri { margin-left: 5px; }
.c1 { width: 189px; padding-left: 7px; }
.c2 { width: 130px; padding-left: 6px; }
.c3 { width: 239px; padding-left: 24px; }
.grid { display: grid; gap: 4px; grid-auto-rows: 44px; grid-template-columns: 48px; align-content: start; margin: 0 auto; }
.g4 { grid-template-columns: repeat(4, 48px); column-gap: 0; margin: 0 4px 0 auto; }
.g3 { grid-template-columns: repeat(3, 48px); column-gap: 2px; }
.g2 { grid-template-columns: repeat(2, 48px); column-gap: 10px; }
.sq { width: 48px; height: 44px; justify-content: center; border: 1px solid #cdcdd0; background: #f7f6f8; }
.sq.thin { width: 24px; border-left: 0; }
.sq.text { font-weight: 700; font-size: 34px; color: #333; }
.sq.on { border: 2px solid #3a6a9c; background: #9fc9f2; }

/* browser panel */
.work { flex: 1; display: flex; }
.side { flex: 0 0 315px; display: flex; flex-direction: column; background: #f0efef; border-right: 3px solid #7c8890; padding: 7px 6px 7px 6px; font: 22px/36px "DejaVu Sans Condensed", "DejaVu Sans", sans-serif; color: #2c2c2c; }
.grip { display: flex; height: 24px; align-items: flex-start; gap: 10px; padding-top: 4px; }
.grip i { flex: 0 0 271px; height: 10px; border: solid #8b8b8b; border-width: 2px 1px 2px 0; }
.model { display: flex; justify-content: space-between; height: 42px; background: #aaa8a8; color: #fff; font-weight: 700; padding: 0 7px 0 16px; }
.model button { gap: 12px; }
.model .tri { border-width: 9px 8px 0; border-top-color: #fff; }
.filter { display: flex; align-items: center; gap: 14px; padding-left: 8px; height: 46px; }
.filter i { width: 2px; height: 36px; background: #999; margin-right: 2px; }
.tree { flex: 1; margin-top: 8px; border: 2px solid #777; background: #fff; white-space: nowrap; }
.node { display: flex; align-items: center; gap: 5px; height: 36px; background: #f0efef; padding-left: 47px; position: relative; }
.root { padding-left: 9px; }
.tree li { position: relative; }
.tree li li .node { padding-left: 85px; }
.tree .active .node { background: #fff; }
/* guide lines join each item to its parent */
.tree li::before { content: ""; position: absolute; z-index: 1; left: 16px; top: 0; bottom: 0; width: 2px; background: #888; }
.tree ul > li:last-child::before { bottom: auto; height: 18px; }
.tree li li::before { left: 54px; }
.node::before { content: ""; position: absolute; left: 16px; top: 17px; width: 24px; height: 2px; background: #888; }
.tree li li .node::before { left: 54px; }
.root::before { display: none; }
.tg { position: absolute; z-index: 2; left: 8px; top: 9px; width: 18px; height: 18px; border: 2px solid #777; background: #fff; color: #000; justify-content: center; font: 700 18px/14px "DejaVu Sans", sans-serif; }

/* graphics window */
.canvas { flex: 1; position: relative; overflow: hidden; background: #c3dcf7; }
.scene { position: absolute; inset: 0; width: 100%; height: 100%; }
.docctl { position: absolute; right: 4px; top: 13px; display: flex; gap: 16px; }
.cube { position: absolute; right: 61px; top: 109px; width: 92px; height: 92px; border: 2px solid #8091a0; background: rgba(214, 226, 234, .85); box-shadow: 0 0 20px rgba(150, 165, 200, .4); justify-content: center; font-size: 22px; color: #7d8791; }
.cube span { transform: rotate(180deg); background: rgba(192, 208, 220, .5); padding: 12px 6px; }
.nav { position: absolute; right: 2px; top: 253px; width: 70px; height: 448px; border: 3px solid #8296a6; border-radius: 10px; background: #cddfea; display: flex; flex-direction: column; align-items: center; padding: 5px 4px; }
.nav .end { align-self: flex-end; margin-right: 2px; }
.nav .wheel { margin: 21px 0 14px; }
.nav .last { margin-top: auto; }
.nav .tri { border-top-color: #7b8f9c; margin-right: 6px; }
.nav hr { width: 48px; border: 0; border-top: 2px solid #93a5b1; margin: 10px 0 13px; }
.nav button + button { margin-top: 15px; }
.nav .end + .wheel { margin-top: 21px; }
.nav button:not(.wheel) + .tri { margin: 16px 6px 14px 0; }
.nav .tri + button { margin-top: 0; }
.nav button + .last { margin-top: auto; }
.axes { position: absolute; left: 24px; bottom: 88px; font: 22px "DejaVu Sans Condensed", sans-serif; }

/* status bar */
.status { display: flex; align-items: center; height: 50px; font-size: 22px; color: #222; background: linear-gradient(#fdfdfd, #dcdcdc 50%, #b9b9b9); white-space: nowrap; padding-top: 6px; }
.ready { flex: 1; padding-left: 2px; }
.snap { flex: 0 0 560px; display: flex; align-items: center; gap: 16px; padding-left: 13px; border-left: 1px solid #d6d6d6; height: 42px; }
.snap .tri { margin: 0 -4px; }
.status output { border-left: 1px solid #ddd; height: 42px; line-height: 42px; padding-left: 7px; }
.xy { flex: 0 0 236px; }
.fc { flex: 0 0 200px; }
.n1 { flex: 0 0 75px; }
.status output.n1 { padding-left: 13px; }
```
